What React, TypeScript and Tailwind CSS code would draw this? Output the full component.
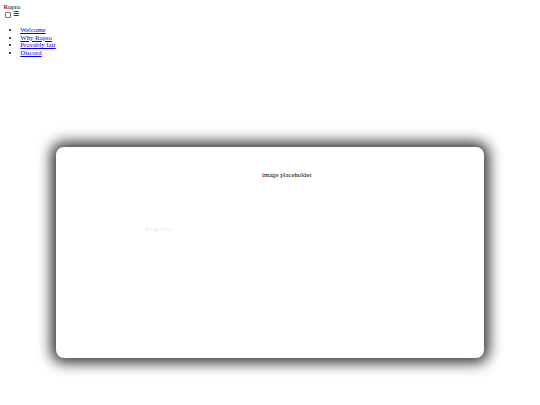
const links = ['Welcome', 'Why Ropro', 'Provably fair', 'Discord'];

export default function App() {
  return (
    <div className="min-h-[405px] bg-white p-[3.4px] text-[6.75px] leading-[7.8px] text-black font-['Liberation_Serif',serif]">
      <div>Ropro</div>
      <div className="flex items-center h-[7.8px]">
        <span className="ml-[1.7px] mr-[1.3px] w-[5.5px] h-[5.5px] border-[0.6px] border-[#767676] rounded-[1px] bg-white" />
        <span className="ml-[1px] text-[7px]">☰</span>
      </div>
      <ul className="my-[6.75px] pl-[16.9px] list-disc">
        {links.map(l => (
          <li key={l}>
            <a href="#" className="text-[#0000ee] underline">{l}</a>
          </li>
        ))}
      </ul>
      <div className="mt-[90px] mx-auto w-[428px] h-[211px] bg-white rounded-[8px] shadow-[0_0_14px_5px_rgba(0,0,0,0.8)]">
        <div className="pt-[24px] pl-[206px]">image placeholder</div>
        <div className="mt-[46px] pl-[89px] text-[#e6e6e6] tracking-[0.6px]">Register</div>
      </div>
    </div>
  );
}
